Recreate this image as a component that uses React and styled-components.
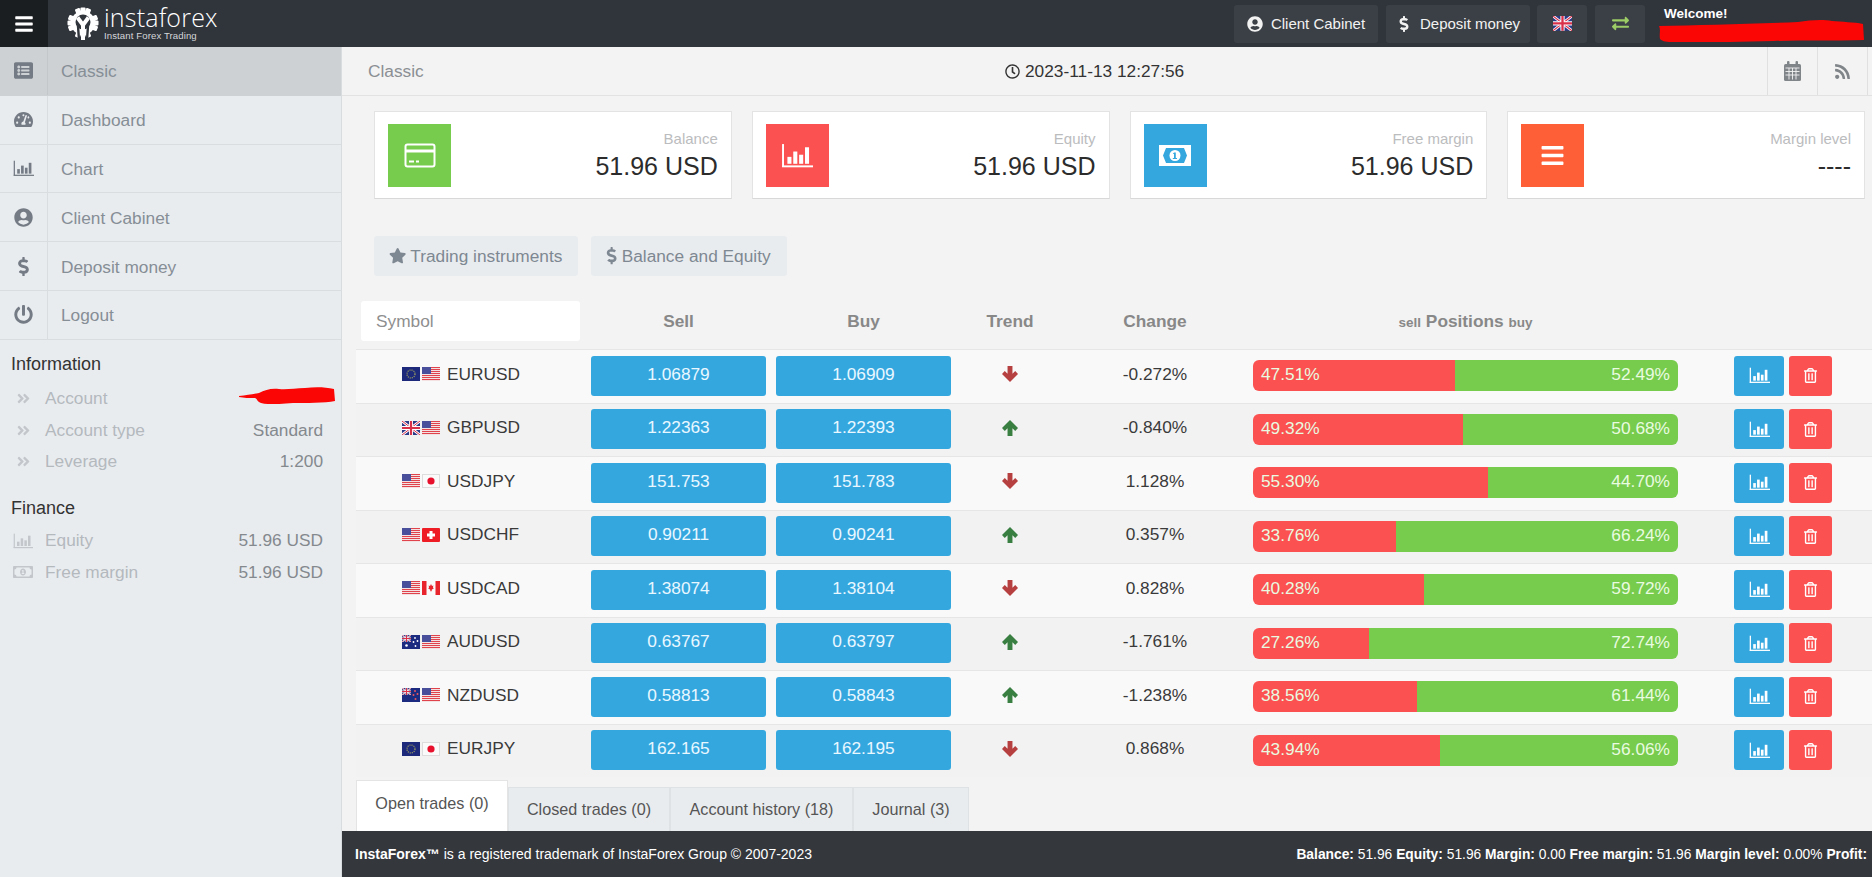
import styled, { createGlobalStyle } from "styled-components";
import {
  FaListAlt,
  FaTachometerAlt,
  FaUserCircle,
  FaDollarSign,
  FaPowerOff,
  FaAngleDoubleRight,
  FaRegMoneyBillAlt,
  FaStar,
  FaRegClock,
  FaRss,
  FaExchangeAlt,
  FaRegTrashAlt,
  FaBars,
} from "react-icons/fa";

const GlobalStyle = createGlobalStyle`
  html, body {
    margin: 0;
    height: 100%;
    overflow: hidden;
    background: #f3f3f3;
    font-family: "Liberation Sans", Arial, sans-serif;
  }
  * {
    box-sizing: border-box;
  }
`;

const Page = styled.div`
  display: flex;
  flex-direction: column;
  width: 1872px;
  height: 877px;
  overflow: hidden;
`;

const Header = styled.header`
  display: flex;
  align-items: center;
  flex: 0 0 47px;
  height: 47px;
  background: #30343b;
`;

const MenuToggle = styled.div`
  display: flex;
  align-items: center;
  justify-content: center;
  width: 48px;
  height: 100%;
  background: #1b1e20;
  color: #fff;
  font-size: 20px;
`;

const Logo = styled.div`
  display: flex;
  align-items: center;
  gap: 5px;
  margin-left: 19px;
  flex: 1;
`;

const LogoText = styled.div`
  display: flex;
  flex-direction: column;
  color: #fff;
  .name {
    font-family: "Open Sans", sans-serif;
    font-weight: 300;
    font-size: 25px;
    line-height: 27px;
    letter-spacing: 0.2px;
    margin-top: -4px;
  }
  .tag {
    font-size: 9.6px;
    line-height: 9px;
    color: #d5d7da;
    letter-spacing: 0.1px;
  }
`;

const HeadButton = styled.div`
  display: flex;
  align-items: center;
  justify-content: center;
  gap: 8px;
  width: ${(p) => p.$w}px;
  height: 38px;
  margin-right: ${(p) => p.$mr ?? 8}px;
  background: #3b4046;
  border-radius: 3px;
  color: #f2f2f2;
  font-size: 15px;
  svg {
    flex: none;
  }
`;

const Welcome = styled.div`
  display: flex;
  flex-direction: column;
  align-self: stretch;
  width: 227px;
  padding: 6px 9px 0 19px;
  color: #fff;
  font-size: 13.5px;
  font-weight: bold;
  line-height: 15px;
  svg {
    margin: -2px 0 0 -6px;
  }
`;

const Body = styled.div`
  display: flex;
  flex: 1;
  min-height: 0;
`;

const Sidebar = styled.aside`
  flex: 0 0 342px;
  background: #e9ecef;
  border-right: 1px solid #d9dcdf;
`;

const NavItem = styled.div`
  display: flex;
  align-items: stretch;
  height: 48.8px;
  border-bottom: 1px solid ${(p) => (p.$active ? "#cdd1d4" : "#dadde0")};
  background: ${(p) => (p.$active ? "#cdd1d4" : "transparent")};
  color: #868e96;
  font-size: 17.3px;
`;

const NavIcon = styled.div`
  display: flex;
  align-items: center;
  justify-content: center;
  flex: 0 0 48px;
  border-right: 1px solid ${(p) => (p.$active ? "#c3c7ca" : "#dadde0")};
  color: #747b84;
  font-size: 19px;
`;

const NavLabel = styled.div`
  display: flex;
  align-items: center;
  padding: 2px 0 0 13px;
`;

const InfoTitle = styled.div`
  margin: ${(p) => p.$mt}px 0 0 11px;
  color: #333;
  font-size: 18px;
  line-height: 24px;
`;

const InfoList = styled.div`
  margin-top: ${(p) => p.$mt}px;
  padding: 0 18px 0 11px;
`;

const InfoRow = styled.div`
  display: flex;
  align-items: center;
  height: 31.6px;
  color: #b4b9be;
  font-size: 17.3px;
  .icon {
    display: flex;
    justify-content: center;
    width: 24px;
    margin-right: 10px;
    color: #c3c7cb;
    font-size: 15px;
  }
  .value {
    margin-left: auto;
    color: #84898e;
  }
`;

const AccountMark = styled.svg`
  margin: -6px -12px 0 auto;
`;

const Main = styled.main`
  display: flex;
  flex-direction: column;
  flex: 1;
  min-width: 0;
`;

const TopBar = styled.div`
  display: flex;
  align-items: stretch;
  flex: 0 0 49px;
  padding-left: 26px;
  border-bottom: 1px solid #e2e2e2;
  color: #8b8f93;
  font-size: 17.3px;
`;

const PageTitle = styled.div`
  display: flex;
  align-items: center;
  width: 637px;
`;

const Clock = styled.div`
  display: flex;
  align-items: center;
  gap: 5px;
  color: #333;
  flex: 1;
  svg {
    font-size: 15px;
  }
`;

const TopAction = styled.div`
  display: flex;
  align-items: center;
  justify-content: center;
  flex: 0 0 ${(p) => p.$w}px;
  border-left: 1px solid #e0e0e0;
  color: #80858a;
  font-size: 17px;
`;

const CardRow = styled.div`
  display: grid;
  grid-template-columns: repeat(4, 1fr);
  gap: 20px;
  padding: 15px 7px 0 32px;
`;

const Card = styled.div`
  display: flex;
  justify-content: space-between;
  height: 88px;
  padding: 12px 13px 0 13px;
  background: #fff;
  border: 1px solid #e3e3e3;
  border-bottom-color: #d8d8d8;
`;

const CardIcon = styled.div`
  display: flex;
  align-items: center;
  justify-content: center;
  width: 63px;
  height: 63px;
  background: ${(p) => p.$bg};
  color: #fff;
  font-size: 25px;
`;

const CardText = styled.div`
  display: flex;
  flex-direction: column;
  align-items: flex-end;
  padding-top: 5px;
  .label {
    color: #bbbcbe;
    font-size: 15px;
    line-height: 20px;
  }
  .value {
    margin-top: 1.5px;
    color: #2c2c2c;
    font-size: 25px;
    line-height: 30px;
  }
`;

const PillRow = styled.div`
  display: flex;
  gap: 13px;
  padding: 37px 0 0 32px;
`;

const Pill = styled.div`
  display: flex;
  align-items: center;
  gap: 4px;
  height: 40px;
  padding: 0 16px 0 15px;
  background: #e9ecef;
  border-radius: 3px;
  color: #7e8892;
  font-size: 17.3px;
`;

const PillDollar = styled(FaDollarSign)`
  margin: 0 -3px;
`;

const GRID = "235px 175px 185px 118px 172px 437px 1fr";

const TableHead = styled.div`
  display: grid;
  grid-template-columns: ${GRID};
  align-items: center;
  height: 40px;
  margin: 25px 0 8px 14px;
  color: #888;
  font-size: 17.3px;
  font-weight: bold;
  text-align: center;
`;

const SymbolFilter = styled.div`
  width: 219px;
  height: 40px;
  margin-left: 5px;
  padding-left: 15px;
  background: #fff;
  border-radius: 3px;
  color: #8f8f8f;
  font-weight: normal;
  line-height: 40px;
  text-align: left;
`;

const HeadCell = styled.div`
  margin-left: ${(p) => p.$ml || 0}px;
  small {
    font-size: 13.5px;
  }
`;

const Rows = styled.div`
  margin-left: 14px;
`;

const Row = styled.div`
  display: grid;
  grid-template-columns: ${GRID};
  align-items: center;
  height: 53.5px;
  padding-bottom: 1px;
  background: ${(p) => (p.$even ? "#f2f2f2" : "#f9f9f9")};
  border-top: 1px solid #e6e6e6;
  color: #3a3a3a;
  font-size: 17.3px;
`;

const SymbolCell = styled.div`
  display: flex;
  align-items: center;
  gap: 2px;
  padding: 0 0 3px 46px;
  span {
    margin-left: 5px;
  }
`;

const Price = styled.div`
  display: flex;
  align-items: center;
  justify-content: center;
  width: 175px;
  height: 40px;
  margin-left: ${(p) => p.$ml || 0}px;
  padding-bottom: 3px;
  background: #35a7df;
  border-radius: 3px;
  color: #e9f8ff;
`;

const Trend = styled.div`
  display: flex;
  justify-content: center;
  padding-bottom: 3px;
  color: ${(p) => (p.$up ? "#3a7f42" : "#b5403f")};
`;

const Change = styled.div`
  padding-bottom: 3px;
  text-align: center;
`;

const Bar = styled.div`
  display: flex;
  width: 425px;
  height: 31px;
  margin-left: 12px;
  border-radius: 6px;
  overflow: hidden;
  color: #e9fbe0;
  line-height: 29px;
`;

const BarPart = styled.div`
  padding: ${(p) => (p.$sell ? "0 0 0 8px" : "0 8px 0 0")};
  background: ${(p) => (p.$sell ? "#fb5151" : "#77cb4d")};
  text-align: ${(p) => (p.$sell ? "left" : "right")};
`;

const Actions = styled.div`
  display: flex;
  gap: 5px;
  margin-left: 56px;
`;

const IconButton = styled.div`
  display: flex;
  align-items: center;
  justify-content: center;
  width: ${(p) => p.$w}px;
  height: 40px;
  background: ${(p) => p.$bg};
  border-radius: 3px;
  color: #fff;
  font-size: 15px;
`;

const BottomTabs = styled.div`
  display: flex;
  align-items: flex-end;
  height: 54px;
  margin-left: 14px;
  padding-top: 3px;
`;

const BottomTab = styled.div`
  display: flex;
  align-items: center;
  justify-content: center;
  width: ${(p) => p.$w}px;
  height: ${(p) => (p.$active ? 51 : 44)}px;
  padding-bottom: ${(p) => (p.$active ? 5 : 1)}px;
  background: ${(p) => (p.$active ? "#fff" : "#e9ecef")};
  border: 1px solid ${(p) => (p.$active ? "#e4e4e4" : "#dfe2e5")};
  border-bottom: 0;
  color: #555;
  font-size: 16.2px;
`;

const Footer = styled.footer`
  display: flex;
  align-items: center;
  justify-content: space-between;
  flex: 0 0 46px;
  padding: 0 5px 0 13px;
  background: #34373c;
  color: #fff;
  font-size: 14px;
  white-space: nowrap;
`;

const FooterStats = styled.span`
  font-size: 13.8px;
`;

const ChartGlyph = ({ size = 24 }) => (
  <svg width={size} height={size * 0.8} viewBox="0 0 30 24" fill="currentColor">
    <rect x="1" y="1" width="1.8" height="21.5" />
    <rect x="1" y="21" width="29" height="1.8" />
    <rect x="6" y="13" width="3.8" height="6.5" />
    <rect x="11.5" y="8" width="3.8" height="11.5" />
    <rect x="17" y="11" width="3.8" height="8.5" />
    <rect x="22.5" y="4" width="3.8" height="15.5" />
  </svg>
);

const CardGlyph = () => (
  <svg width="32" height="25" viewBox="0 0 32 25" fill="none" stroke="#fff" strokeWidth="2">
    <rect x="1.5" y="1.5" width="29" height="22" rx="2" />
    <path d="M1.5 8h29" strokeWidth="3" />
    <path d="M5 18.5h5M12 18.5h3" />
  </svg>
);

const BillGlyph = () => (
  <svg width="32" height="21" viewBox="0 0 32 21">
    <rect width="32" height="21" fill="#fff" />
    <path d="M7 3h18l3 7.500-3 7.500H7l-3-7.500z" fill="#35a7df" />
    <circle cx="16" cy="10.500" r="5.500" fill="#fff" />
    <path d="M15 7.500h1.800v5.500H18v1h-4.200v-1H15V9h-1.200z" fill="#35a7df" />
  </svg>
);

const ArrowGlyph = ({ up }) => (
  <svg width="16" height="16" viewBox="0 0 15 15" fill="currentColor">
    <path
      d="M5.200 0h4.600v7.300l2.600-2.600L15 7.500 7.500 15 0 7.500l2.600-2.800 2.600 2.600z"
      transform={up ? "rotate(180 7.500 7.500)" : undefined}
    />
  </svg>
);

const CalendarGlyph = () => (
  <svg width="17" height="20" viewBox="0 0 17 20">
    <rect y="3" width="17" height="17" rx="1.500" fill="#80858a" />
    <rect x="3" width="2.500" height="5" rx="1" fill="#80858a" />
    <rect x="11.500" width="2.500" height="5" rx="1" fill="#80858a" />
    <path d="M1.500 7h14M1.500 10.500h14M1.500 14h14M5 7v11.500M8.500 7v11.500M12 7v11.500" stroke="#f3f3f3" strokeWidth="0.900" />
  </svg>
);

const Union = ({ w = 18, h = 14 }) => (
  <g>
    <rect width={w} height={h} fill="#2b3a87" />
    <path d={`M0 0L${w} ${h}M${w} 0L0 ${h}`} stroke="#fff" strokeWidth="2.6" />
    <path d={`M0 0L${w} ${h}M${w} 0L0 ${h}`} stroke="#d9304a" strokeWidth="1" />
    <path d={`M${w / 2} 0V${h}M0 ${h / 2}H${w}`} stroke="#fff" strokeWidth="4" />
    <path d={`M${w / 2} 0V${h}M0 ${h / 2}H${w}`} stroke="#d9304a" strokeWidth="2.2" />
  </g>
);

const flagParts = {
  EUR: (
    <g>
      <rect width="18" height="14" fill="#1d2a7c" />
      <circle cx="9" cy="7" r="4" fill="none" stroke="#a4a65a" strokeWidth="1.2" strokeDasharray="1.1 1" />
    </g>
  ),
  USD: (
    <g>
      <rect width="18" height="14" fill="#f7f3f3" />
      {[0, 2, 4, 6, 8, 10, 12].map((y) => (
        <rect key={y} y={y} width="18" height="1.1" fill="#e0434b" />
      ))}
      <rect width="9" height="7" fill="#4a4f9c" />
    </g>
  ),
  GBP: <Union />,
  JPY: (
    <g>
      <rect x="0.5" y="0.5" width="17" height="13" fill="#fafafa" stroke="#ddd" />
      <circle cx="9" cy="7" r="3.6" fill="#e8112d" />
    </g>
  ),
  CHF: (
    <g>
      <rect width="18" height="14" rx="1" fill="#ee1c25" />
      <path d="M7.5 3h3v2.5H13v3h-2.5V11h-3V8.5H5v-3h2.5z" fill="#fff" />
    </g>
  ),
  CAD: (
    <g>
      <rect width="18" height="14" fill="#fafafa" />
      <rect width="4.5" height="14" fill="#e8242c" />
      <rect x="13.5" width="4.5" height="14" fill="#e8242c" />
      <path d="M9 3l1 2 1.4-.4-.5 2 1 .6-2.2 1.6v1.4H8.300V8.800L6.100 7.200l1-.6-.5-2L8 5z" fill="#e8242c" />
    </g>
  ),
  AUD: (
    <g>
      <rect width="18" height="14" fill="#1c2a80" />
      <svg width="9" height="7" viewBox="0 0 18 14">
        <Union />
      </svg>
      <circle cx="4.500" cy="10.500" r="1.300" fill="#fff" />
      <circle cx="13" cy="3" r=".9" fill="#fff" />
      <circle cx="15.500" cy="6" r=".9" fill="#fff" />
      <circle cx="11.500" cy="7" r=".9" fill="#fff" />
      <circle cx="13.500" cy="11" r=".9" fill="#fff" />
    </g>
  ),
  NZD: (
    <g>
      <rect width="18" height="14" fill="#1c2a80" />
      <svg width="9" height="7" viewBox="0 0 18 14">
        <Union />
      </svg>
      <circle cx="13" cy="3" r="1" fill="#e8555f" />
      <circle cx="15.500" cy="6" r="1" fill="#e8555f" />
      <circle cx="11.500" cy="7" r="1" fill="#e8555f" />
      <circle cx="13.500" cy="11" r="1" fill="#e8555f" />
    </g>
  ),
};

const Flag = ({ code, size = 18 }) => (
  <svg width={size} height={(size * 14) / 18} viewBox="0 0 18 14">
    {flagParts[code]}
  </svg>
);

const LogoMark = () => (
  <svg width="32" height="33" viewBox="0 0 32 33">
    <g fill="#fff">
      <circle cx="16" cy="16" r="12" />
      {[22.5, 67.5, 112.5, 157.5, 202.5, 247.5, 292.5, 337.5, 0, 90, 270].map((a) => (
        <rect key={a} x="13.400" y="0.500" width="5.200" height="6" rx="1" transform={`rotate(${a} 16 16)`} />
      ))}
    </g>
    <circle cx="16" cy="15" r="7.500" fill="#30343b" />
    <path d="M11 19l1 14M21 19l-1 14" stroke="#30343b" strokeWidth="2.400" />
    <path d="M16 33V18L10.500 10.500M16 18l5.500-7.500" fill="none" stroke="#fff" strokeWidth="4" />
  </svg>
);

const Scribble = ({ width, height, d }) => (
  <svg width={width} height={height} viewBox={`0 0 ${width} ${height}`}>
    <path d={d} fill="#fb0505" />
  </svg>
);

const quotes = [
  { symbol: "EURUSD", flags: ["EUR", "USD"], sell: "1.06879", buy: "1.06909", up: false, change: "-0.272%", s: 47.51, b: 52.49 },
  { symbol: "GBPUSD", flags: ["GBP", "USD"], sell: "1.22363", buy: "1.22393", up: true, change: "-0.840%", s: 49.32, b: 50.68 },
  { symbol: "USDJPY", flags: ["USD", "JPY"], sell: "151.753", buy: "151.783", up: false, change: "1.128%", s: 55.3, b: 44.7 },
  { symbol: "USDCHF", flags: ["USD", "CHF"], sell: "0.90211", buy: "0.90241", up: true, change: "0.357%", s: 33.76, b: 66.24 },
  { symbol: "USDCAD", flags: ["USD", "CAD"], sell: "1.38074", buy: "1.38104", up: false, change: "0.828%", s: 40.28, b: 59.72 },
  { symbol: "AUDUSD", flags: ["AUD", "USD"], sell: "0.63767", buy: "0.63797", up: true, change: "-1.761%", s: 27.26, b: 72.74 },
  { symbol: "NZDUSD", flags: ["NZD", "USD"], sell: "0.58813", buy: "0.58843", up: true, change: "-1.238%", s: 38.56, b: 61.44 },
  { symbol: "EURJPY", flags: ["EUR", "JPY"], sell: "162.165", buy: "162.195", up: false, change: "0.868%", s: 43.94, b: 56.06 },
];

const cards = [
  { label: "Balance", value: "51.96 USD", bg: "#77cb4d", icon: <CardGlyph /> },
  { label: "Equity", value: "51.96 USD", bg: "#fb5151", icon: <ChartGlyph size={32} /> },
  { label: "Free margin", value: "51.96 USD", bg: "#35a7df", icon: <BillGlyph /> },
  { label: "Margin level", value: "----", bg: "#ff5f37", icon: <FaBars /> },
];

const nav = [
  { label: "Classic", icon: <FaListAlt />, active: true },
  { label: "Dashboard", icon: <FaTachometerAlt /> },
  { label: "Chart", icon: <ChartGlyph size={21} /> },
  { label: "Client Cabinet", icon: <FaUserCircle /> },
  { label: "Deposit money", icon: <FaDollarSign /> },
  { label: "Logout", icon: <FaPowerOff /> },
];

const tabs = [
  { label: "Open trades (0)", w: 152, active: true },
  { label: "Closed trades (0)", w: 162 },
  { label: "Account history (18)", w: 183 },
  { label: "Journal (3)", w: 116 },
];

const App = () => {
  return (
    <Page>
      <GlobalStyle />
      <Header>
        <MenuToggle>
          <FaBars />
        </MenuToggle>
        <Logo>
          <LogoMark />
          <LogoText>
            <div className="name">instaforex</div>
            <div className="tag">Instant Forex Trading</div>
          </LogoText>
        </Logo>
        <HeadButton $w={144}>
          <FaUserCircle size={16} /> Client Cabinet
        </HeadButton>
        <HeadButton $w={144} $mr={7}>
          <FaDollarSign size={16} /> Deposit money
        </HeadButton>
        <HeadButton $w={50}>
          <Flag code="GBP" size={19} />
        </HeadButton>
        <HeadButton $w={50} $mr={0}>
          <FaExchangeAlt size={17} color="#9ccc65" />
        </HeadButton>
        <Welcome>
          Welcome!
          <Scribble
            width={206}
            height={24}
            d="M1 7C40 6 90 5 140 3c12-2 25-3 34-1 10 1 22 1 31 3l1 16c-30 1-60 0-90 1-30 1-60 1-90 1-12 0-20 1-24-3C1 15 3 11 1 7z"
          />
        </Welcome>
      </Header>
      <Body>
        <Sidebar>
          {nav.map((item) => (
            <NavItem key={item.label} $active={item.active}>
              <NavIcon $active={item.active}>{item.icon}</NavIcon>
              <NavLabel>{item.label}</NavLabel>
            </NavItem>
          ))}
          <InfoTitle $mt={12.5}>Information</InfoTitle>
          <InfoList $mt={6.5}>
            <InfoRow>
              <span className="icon">
                <FaAngleDoubleRight />
              </span>
              Account
              <AccountMark width="96" height="17" viewBox="0 0 96 17">
                <path
                  d="M0 9c8-1 14-2 20-3 6-3 12-5 20-4 8 1 16-1 26-1 10-1 20-1 29 1l1 12c-10 2-30 2-42 2-12 1-24 2-32 0-5-2-3-4-6-5-6 0-11 0-16-1z"
                  fill="#fb0505"
                />
              </AccountMark>
            </InfoRow>
            <InfoRow>
              <span className="icon">
                <FaAngleDoubleRight />
              </span>
              Account type
              <span className="value">Standard</span>
            </InfoRow>
            <InfoRow>
              <span className="icon">
                <FaAngleDoubleRight />
              </span>
              Leverage
              <span className="value">1:200</span>
            </InfoRow>
          </InfoList>
          <InfoTitle $mt={18.5}>Finance</InfoTitle>
          <InfoList $mt={5}>
            <InfoRow>
              <span className="icon">
                <ChartGlyph size={20} />
              </span>
              Equity
              <span className="value">51.96 USD</span>
            </InfoRow>
            <InfoRow>
              <span className="icon">
                <FaRegMoneyBillAlt size={20} />
              </span>
              Free margin
              <span className="value">51.96 USD</span>
            </InfoRow>
          </InfoList>
        </Sidebar>
        <Main>
          <TopBar>
            <PageTitle>Classic</PageTitle>
            <Clock>
              <FaRegClock /> 2023-11-13 12:27:56
            </Clock>
            <TopAction $w={50}>
              <CalendarGlyph />
            </TopAction>
            <TopAction $w={50}>
              <FaRss />
            </TopAction>
            <TopAction $w={5} />
          </TopBar>
          <CardRow>
            {cards.map((card) => (
              <Card key={card.label}>
                <CardIcon $bg={card.bg}>{card.icon}</CardIcon>
                <CardText>
                  <span className="label">{card.label}</span>
                  <span className="value">{card.value}</span>
                </CardText>
              </Card>
            ))}
          </CardRow>
          <PillRow>
            <Pill>
              <FaStar /> Trading instruments
            </Pill>
            <Pill>
              <PillDollar /> Balance and Equity
            </Pill>
          </PillRow>
          <TableHead>
            <SymbolFilter>Symbol</SymbolFilter>
            <HeadCell>Sell</HeadCell>
            <HeadCell $ml={10}>Buy</HeadCell>
            <HeadCell>Trend</HeadCell>
            <HeadCell>Change</HeadCell>
            <HeadCell $ml={12}>
              <small>sell</small> Positions <small>buy</small>
            </HeadCell>
          </TableHead>
          <Rows>
            {quotes.map((q, i) => (
              <Row key={q.symbol} $even={i % 2 === 1}>
                <SymbolCell>
                  <Flag code={q.flags[0]} />
                  <Flag code={q.flags[1]} />
                  <span>{q.symbol}</span>
                </SymbolCell>
                <Price>{q.sell}</Price>
                <Price $ml={10}>{q.buy}</Price>
                <Trend $up={q.up}>
                  <ArrowGlyph up={q.up} />
                </Trend>
                <Change>{q.change}</Change>
                <Bar>
                  <BarPart $sell style={{ width: `${q.s}%` }}>
                    {q.s.toFixed(2)}%
                  </BarPart>
                  <BarPart style={{ width: `${q.b}%` }}>{q.b.toFixed(2)}%</BarPart>
                </Bar>
                <Actions>
                  <IconButton $w={50} $bg="#35a7df">
                    <ChartGlyph size={21} />
                  </IconButton>
                  <IconButton $w={43} $bg="#fb5151">
                    <FaRegTrashAlt />
                  </IconButton>
                </Actions>
              </Row>
            ))}
          </Rows>
          <BottomTabs>
            {tabs.map((tab) => (
              <BottomTab key={tab.label} $w={tab.w} $active={tab.active}>
                {tab.label}
              </BottomTab>
            ))}
          </BottomTabs>
          <Footer>
            <span>
              <b>InstaForex™</b> is a registered trademark of InstaForex Group © 2007-2023
            </span>
            <FooterStats>
              <b>Balance:</b> 51.96 <b>Equity:</b> 51.96 <b>Margin:</b> 0.00 <b>Free margin:</b> 51.96{" "}
              <b>Margin level:</b> 0.00% <b>Profit:</b>
            </FooterStats>
          </Footer>
        </Main>
      </Body>
    </Page>
  );
};

export default App;
